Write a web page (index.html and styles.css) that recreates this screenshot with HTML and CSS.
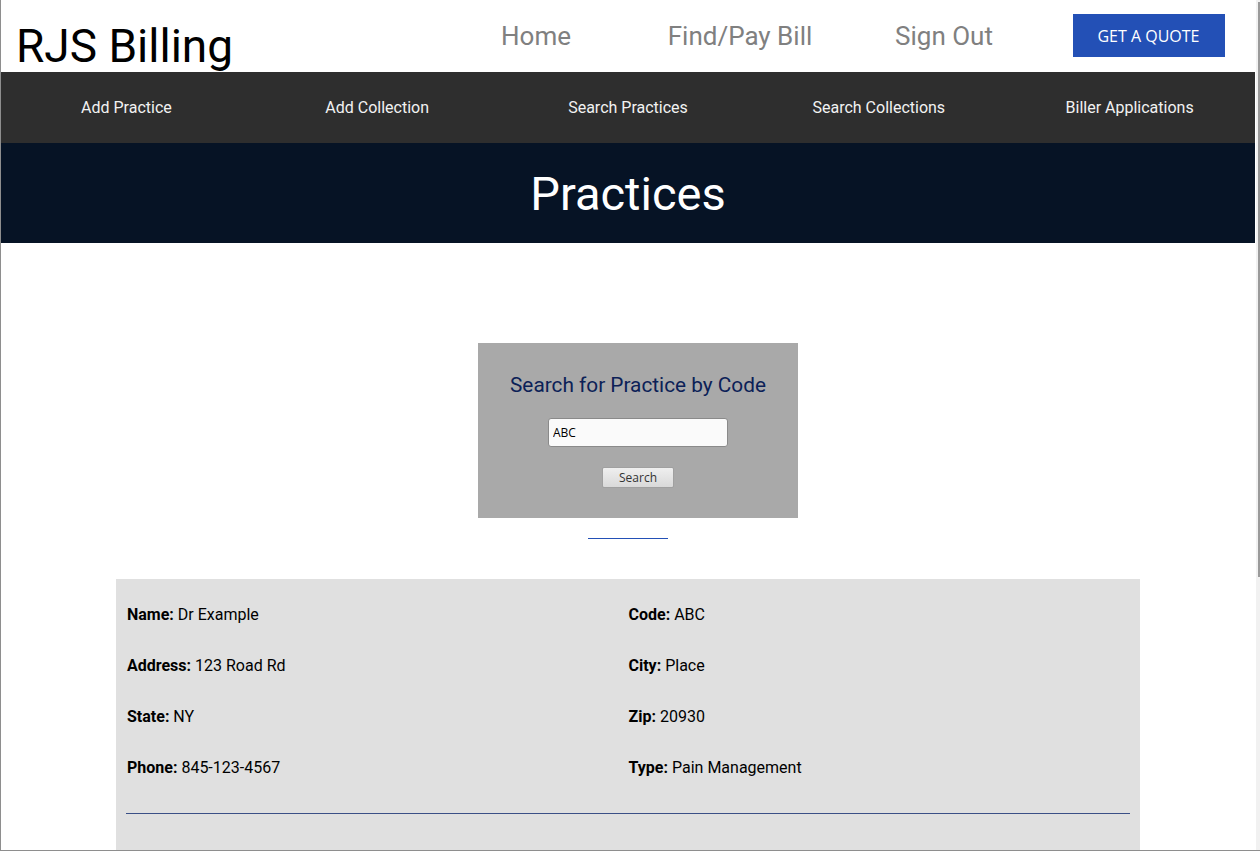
FILE: index.html
```html
<!DOCTYPE html>
<html lang="en">
<head>
<meta charset="utf-8">
<title>RJS Billing - Practices</title>
<link rel="stylesheet" href="styles.css">
</head>
<body>
<div class="window">
  <div class="page">
    <header class="topbar">
      <div class="brand">RJS Billing</div>
      <nav class="mainnav">
        <a class="mainnav-link" href="#">Home</a>
        <a class="mainnav-link" href="#">Find/Pay Bill</a>
        <a class="mainnav-link" href="#">Sign Out</a>
        <div class="mainnav-cta"><a class="quote-btn" href="#">GET A QUOTE</a></div>
      </nav>
    </header>
    <nav class="subnav">
      <a class="subnav-link" href="#">Add Practice</a>
      <a class="subnav-link" href="#">Add Collection</a>
      <a class="subnav-link" href="#">Search Practices</a>
      <a class="subnav-link" href="#">Search Collections</a>
      <a class="subnav-link" href="#">Biller Applications</a>
    </nav>
    <section class="banner">
      <h1 class="banner-title">Practices</h1>
    </section>
    <main class="content">
      <form class="search-card">
        <h2 class="search-title">Search for Practice by Code</h2>
        <input class="search-input" type="text" value="ABC">
        <button class="search-btn" type="button">Search</button>
      </form>
      <div class="link-rule"></div>
      <section class="details">
        <div class="details-grid">
          <div class="field"><b>Name:</b> Dr Example</div>
          <div class="field"><b>Code:</b> ABC</div>
          <div class="field"><b>Address:</b> 123 Road Rd</div>
          <div class="field"><b>City:</b> Place</div>
          <div class="field"><b>State:</b> NY</div>
          <div class="field"><b>Zip:</b> 20930</div>
          <div class="field"><b>Phone:</b> 845-123-4567</div>
          <div class="field"><b>Type:</b> Pain Management</div>
        </div>
        <hr class="details-rule">
      </section>
    </main>
  </div>
  <div class="scrollbar"><div class="scrollbar-thumb"></div></div>
</div>
</body>
</html>
```

FILE: styles.css
```css
* { box-sizing: border-box; }

html, body {
  margin: 0;
  padding: 0;
  background: #ffffff;
}

body {
  font-family: Roboto, "Liberation Sans", Arial, sans-serif;
}

.window {
  display: flex;
  width: 1260px;
  height: 851px;
  border-left: 1px solid #8e8e8e;
  border-bottom: 1px solid #8e8e8e;
  overflow: hidden;
}

.page {
  flex: 1;
  min-width: 0;
  overflow: hidden;
}

.scrollbar {
  width: 5px;
  background: #f1f1f1;
  border-left: 1px solid #ffffff;
  padding: 2px 1px 0 1px;
}

.scrollbar-thumb {
  height: 575px;
  width: 2px;
  background: #9a9a9a;
  margin-left: 1px;
}

/* Top bar */
.topbar {
  height: 72px;
  display: flex;
  align-items: flex-start;
  justify-content: space-between;
  background: #ffffff;
}

.brand {
  font-size: 46px;
  color: #000000;
  line-height: 1;
  padding: 23px 0 0 15px;
}

.mainnav {
  display: flex;
  align-items: center;
  height: 72px;
  padding-right: 5px;
}

.mainnav-link {
  width: 204px;
  text-align: center;
  font-size: 26px;
  color: #808080;
  text-decoration: none;
  padding-bottom: 1px;
}

.mainnav-cta {
  width: 204px;
  display: flex;
  justify-content: center;
  padding-bottom: 1px;
}

.quote-btn {
  display: block;
  width: 152px;
  height: 43px;
  line-height: 45px;
  background: #2350b6;
  color: #ffffff;
  text-align: center;
  text-decoration: none;
  font-family: "Open Sans", Roboto, sans-serif;
  font-size: 16px;
  margin-left: 1px;
}

/* Sub nav */
.subnav {
  display: grid;
  grid-template-columns: repeat(5, 1fr);
  height: 71px;
  background: #2e2e2e;
  align-items: center;
}

.subnav-link {
  text-align: center;
  color: #f2f2f2;
  text-decoration: none;
  font-size: 16px;
}

/* Banner */
.banner {
  height: 100px;
  background: #061325;
  display: flex;
  align-items: center;
  justify-content: center;
}

.banner-title {
  margin: 0;
  color: #ffffff;
  font-weight: 400;
  font-size: 47px;
  line-height: 1;
}

/* Content */
.content {
  padding-top: 100px;
  display: flex;
  flex-direction: column;
  align-items: center;
}

.search-card {
  width: 320px;
  height: 175px;
  background: #a9a9a9;
  margin-left: 20px;
  display: flex;
  flex-direction: column;
  align-items: center;
  padding-top: 30px;
}

.search-title {
  margin: 0;
  font-size: 20.8px;
  font-weight: 400;
  color: #0c2157;
  line-height: 24px;
}

.search-input {
  margin-top: 21px;
  width: 180px;
  height: 29px;
  border: 1px solid #8a8a8a;
  border-radius: 3px;
  background: #fafafa;
  font-family: "Open Sans", sans-serif;
  font-size: 12px;
  color: #000;
  padding: 0 4px;
}

.search-btn {
  margin-top: 20px;
  width: 72px;
  height: 21px;
  border: 1px solid #a0a0a0;
  border-radius: 2px;
  background: linear-gradient(#efefef, #d9d9d9);
  font-family: "Open Sans", sans-serif;
  font-size: 12px;
  color: #333;
  padding: 0;
}

.link-rule {
  width: 80px;
  height: 1px;
  background: #2350b6;
  margin-top: 20px;
}

.details {
  width: 1024px;
  margin-top: 40px;
  background: #e0e0e0;
  padding: 10px 10px 40px 10px;
}

.details-grid {
  display: grid;
  grid-template-columns: 1fr 1fr;
  grid-auto-rows: 51px;
  align-items: center;
  padding-left: 1px;
}

.field {
  font-size: 16px;
  color: #000;
}

.field b {
  font-weight: 700;
}

.details-rule {
  margin: 20px 0 0 0;
  border: 0;
  height: 1px;
  background: #3a4f86;
}
```
